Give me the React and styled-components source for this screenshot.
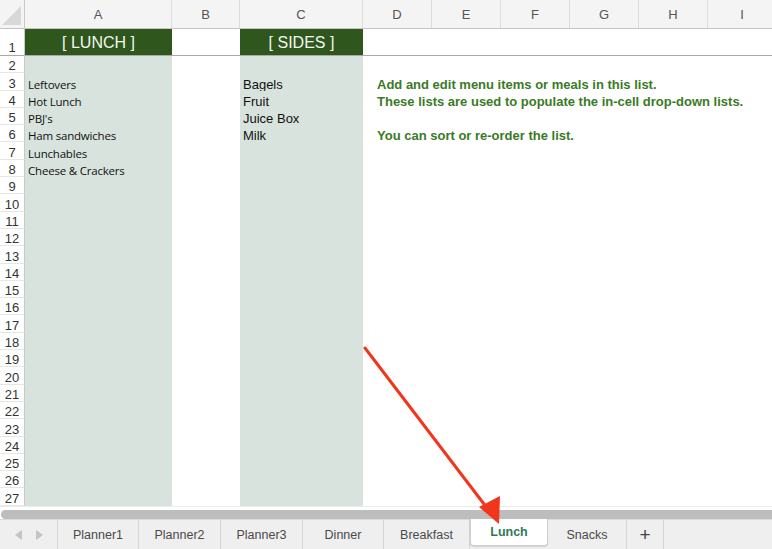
import React from "react";
import styled, { createGlobalStyle } from "styled-components";

const GlobalStyle = createGlobalStyle`
  html, body { margin: 0; padding: 0; background: #fff; }
  body { font-family: "Liberation Sans", Arial, sans-serif; }
`;

const COLS = ["A", "B", "C", "D", "E", "F", "G", "H", "I"];
const WIDTHS = "25px 147px 68px 123px 69px 69px 69px 69px 69px 69px";

const LUNCH = ["Leftovers", "Hot Lunch", "PBJ's", "Ham sandwiches", "Lunchables", "Cheese & Crackers"];
const SIDES = ["Bagels", "Fruit", "Juice Box", "Milk"];
const NOTES = {
  3: "Add and edit menu items or meals in this list.",
  4: "These lists are used to populate the in-cell drop-down lists.",
  6: "You can sort or re-order the list.",
};

const TABS = ["Planner1", "Planner2", "Planner3", "Dinner", "Breakfast", "Lunch", "Snacks"];
const TAB_WIDTHS = [81, 82, 82, 81, 86, 78, 79];

const Page = styled.div`
  position: relative;
  width: 772px;
  height: 549px;
  overflow: hidden;
  display: flex;
  flex-direction: column;
  background: #fff;
`;

const Sheet = styled.div`
  display: grid;
  grid-template-columns: ${WIDTHS};
  grid-template-rows: 29px 27px repeat(26, 17.3px);
  height: 506px;
  overflow: hidden;
  flex-shrink: 0;
`;

const Corner = styled.div`
  position: relative;
  background: #f4f4f4;
  border-right: 1px solid #c9c9c9;
  border-bottom: 1px solid #c4c4c4;
  box-sizing: border-box;
  &::after {
    content: "";
    position: absolute;
    right: 3px;
    bottom: 3px;
    width: 0;
    height: 0;
    border-left: 19px solid transparent;
    border-bottom: 19px solid #d8d8d8;
  }
`;

const ColHeader = styled.div`
  background: #f4f4f4;
  border-right: 1px solid #dcdcdc;
  border-bottom: 1px solid #c4c4c4;
  box-sizing: border-box;
  display: flex;
  align-items: center;
  justify-content: center;
  font-size: 13px;
  color: #555;
`;

const RowHeader = styled.div`
  background: #fff;
  border-right: 1px solid #c9c9c9;
  border-bottom: 1px solid ${(p) => (p.$first ? "#a9a9a9" : "#e6e6e6")};
  box-sizing: border-box;
  display: flex;
  align-items: flex-end;
  justify-content: center;
  padding-bottom: ${(p) => (p.$first ? "1px" : "0")};
  font-size: 13px;
  color: #333;
  line-height: 12px;
`;

const Cell = styled.div`
  position: relative;
  box-sizing: border-box;
  background: ${(p) => (p.$fill === "dark" ? "#2e561d" : p.$fill === "light" ? "#d8e3dd" : "transparent")};
  border-bottom: ${(p) => (p.$first ? "1px solid #a9a9a9" : "none")};
  display: flex;
  align-items: ${(p) => (p.$first ? "center" : "flex-end")};
  justify-content: ${(p) => (p.$first ? "center" : "flex-start")};
  padding: 0 3px;
  white-space: nowrap;
  overflow: visible;
  z-index: ${(p) => (p.$note ? 2 : 1)};
`;

const HeadText = styled.span`
  color: #f4f7f0;
  font-size: 16px;
  margin-top: 1px;
`;

const CalibriText = styled.span`
  font-family: "Open Sans", "Liberation Sans", sans-serif;
  font-size: 11.5px;
  letter-spacing: -0.2px;
  color: #111;
  line-height: 12px;
`;

const PlainText = styled.span`
  font-size: 13px;
  color: #111;
  line-height: 12px;
`;

const NoteText = styled.span`
  font-size: 13px;
  font-weight: bold;
  color: #3b7a26;
  padding-left: 11px;
  line-height: 12px;
`;

const Gap = styled.div`
  height: 4px;
  background: #fff;
  border-top: 1px solid #ececec;
  box-sizing: border-box;
`;

const Scrollbar = styled.div`
  height: 9px;
  background: #bdbdbd;
  border-radius: 5px 0 0 5px;
  margin-left: 1px;
`;

const TabBar = styled.div`
  flex: 1;
  display: flex;
  align-items: stretch;
  background: #efefef;
  border-top: 1px solid #dadada;
`;

const Nav = styled.div`
  width: 58px;
  display: flex;
  align-items: center;
  justify-content: center;
  gap: 14px;
  border-right: 1px solid #d4d4d4;
  box-sizing: border-box;
`;

const Arrow = styled.span`
  width: 0;
  height: 0;
  border-top: 5px solid transparent;
  border-bottom: 5px solid transparent;
  ${(p) => (p.$dir === "left" ? "border-right: 7px solid #c4c4c4;" : "border-left: 7px solid #c4c4c4;")}
`;

const Tab = styled.div`
  box-sizing: border-box;
  display: flex;
  align-items: center;
  justify-content: center;
  font-size: 12.5px;
  color: ${(p) => (p.$active ? "#2f7a55" : "#4a4a4a")};
  font-weight: ${(p) => (p.$active ? "bold" : "normal")};
  background: ${(p) => (p.$active ? "#fff" : "transparent")};
  border-right: 1px solid ${(p) => (p.$active ? "transparent" : "#d4d4d4")};
  ${(p) =>
    p.$active &&
    `
    border: 1px solid #cfcfcf;
    border-top: none;
    border-radius: 0 0 4px 4px;
    margin-bottom: 3px;
    margin-top: -1px;
    box-shadow: 0 1px 1px rgba(0,0,0,0.12);
  `}
`;

const AddTab = styled.div`
  width: 37px;
  box-sizing: border-box;
  display: flex;
  align-items: center;
  justify-content: center;
  border-right: 1px solid #d4d4d4;
  font-size: 19px;
  color: #444;
`;

const Overlay = styled.svg`
  position: absolute;
  left: 0;
  top: 0;
  pointer-events: none;
  z-index: 5;
`;

const cellFill = (col, row) => {
  if (col !== "A" && col !== "C") return null;
  return row === 1 ? "dark" : "light";
};

const cellContent = (col, row) => {
  if (row === 1) {
    if (col === "A") return <HeadText>[ LUNCH ]</HeadText>;
    if (col === "C") return <HeadText>[ SIDES ]</HeadText>;
    return null;
  }
  if (col === "A" && LUNCH[row - 3]) return <CalibriText>{LUNCH[row - 3]}</CalibriText>;
  if (col === "C" && SIDES[row - 3]) return <PlainText>{SIDES[row - 3]}</PlainText>;
  if (col === "D" && NOTES[row]) return <NoteText>{NOTES[row]}</NoteText>;
  return null;
};

const rows = Array.from({ length: 27 }, (_, i) => i + 1);

export default function App() {
  return (
    <Page>
      <GlobalStyle />
      <Sheet>
        <Corner />
        {COLS.map((c) => (
          <ColHeader key={c}>{c}</ColHeader>
        ))}
        {rows.map((r) => (
          <React.Fragment key={r}>
            <RowHeader $first={r === 1}>{r}</RowHeader>
            {COLS.map((c) => (
              <Cell key={c} $fill={cellFill(c, r)} $first={r === 1} $note={c === "D" && NOTES[r]}>
                {cellContent(c, r)}
              </Cell>
            ))}
          </React.Fragment>
        ))}
      </Sheet>
      <Gap />
      <Scrollbar />
      <TabBar>
        <Nav>
          <Arrow $dir="left" />
          <Arrow $dir="right" />
        </Nav>
        {TABS.map((t, i) => (
          <Tab key={t} $active={t === "Lunch"} style={{ width: TAB_WIDTHS[i] }}>
            {t}
          </Tab>
        ))}
        <AddTab>+</AddTab>
      </TabBar>
      <Overlay width="772" height="549" viewBox="0 0 772 549">
        <line x1="365" y1="348" x2="487" y2="508" stroke="#f2361b" strokeWidth="3" strokeLinecap="round" />
        <polygon points="499,524 479,507 500,496" fill="#f2361b" />
      </Overlay>
    </Page>
  );
}
